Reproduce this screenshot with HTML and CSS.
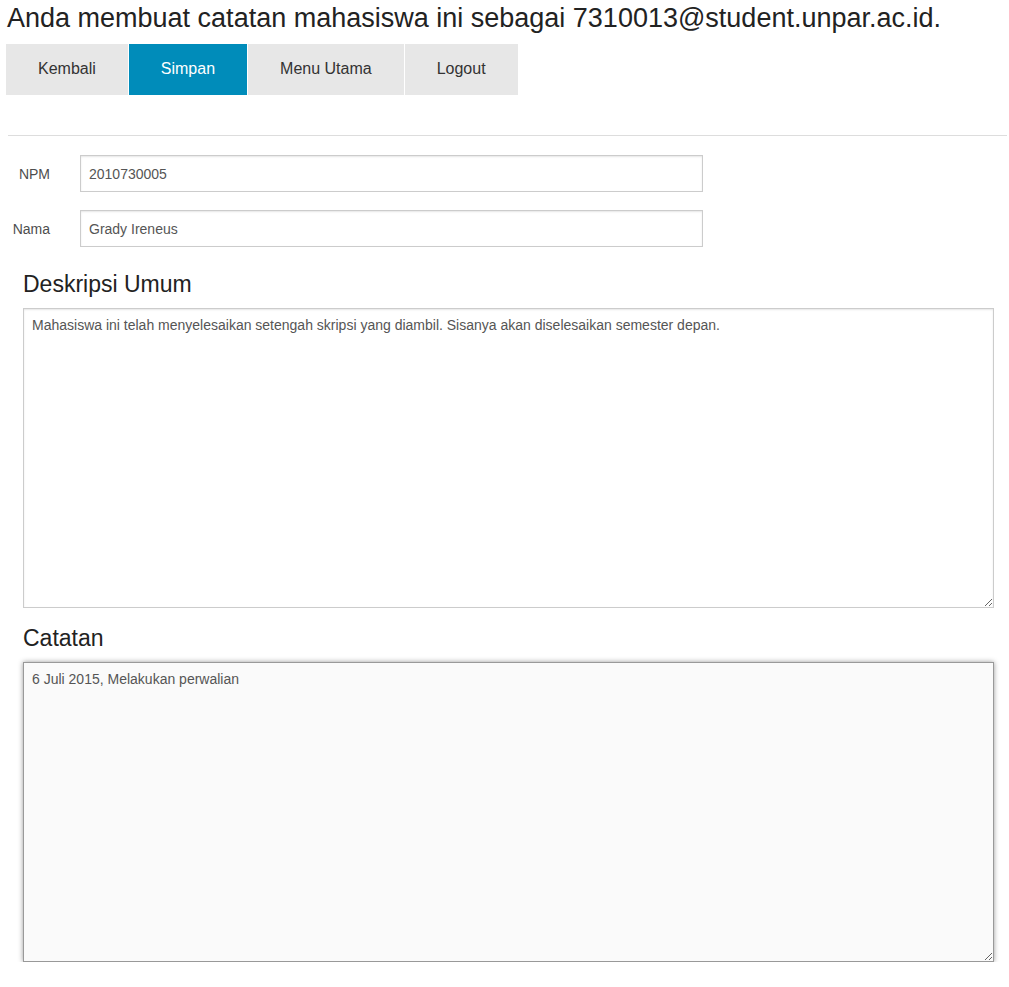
FILE: index.html
```html
<!DOCTYPE html>
<html lang="id">
<head>
<meta charset="utf-8">
<title>Catatan Mahasiswa</title>
<link rel="stylesheet" href="styles.css">
</head>
<body>
<h1 class="title">Anda membuat catatan mahasiswa ini sebagai 7310013@student.unpar.ac.id.</h1>
<nav class="nav">
  <a class="btn" href="#">Kembali</a>
  <a class="btn btn-primary" href="#">Simpan</a>
  <a class="btn" href="#">Menu Utama</a>
  <a class="btn" href="#">Logout</a>
</nav>
<hr class="divider">
<form class="form">
  <div class="row">
    <label class="label" for="npm">NPM</label>
    <input class="input" id="npm" type="text" value="2010730005">
  </div>
  <div class="row">
    <label class="label" for="nama">Nama</label>
    <input class="input" id="nama" type="text" value="Grady Ireneus">
  </div>
  <section class="section section-first">
    <h4 class="heading">Deskripsi Umum</h4>
    <textarea class="area">Mahasiswa ini telah menyelesaikan setengah skripsi yang diambil. Sisanya akan diselesaikan semester depan.</textarea>
  </section>
  <section class="section">
    <h4 class="heading">Catatan</h4>
    <textarea class="area area-focus">6 Juli 2015, Melakukan perwalian</textarea>
  </section>
</form>
</body>
</html>
```
FILE: styles.css
```css
html, body {
  margin: 0;
  padding: 0;
  background: #fff;
}
body {
  font-family: "Liberation Sans", Arial, Helvetica, sans-serif;
  color: #222;
}
.title {
  margin: 0;
  padding: 2px 0 0 7px;
  font-size: 27px;
  font-weight: normal;
  line-height: 32px;
  color: #222;
}
.nav {
  display: flex;
  gap: 1px;
  margin: 10px 0 0 6px;
}
.btn {
  display: block;
  padding: 16px 32px 17px;
  font-size: 16px;
  line-height: 18px;
  background: #e7e7e7;
  color: #333;
  text-decoration: none;
}
.btn-primary {
  background: #008cba;
  color: #fff;
}
.divider {
  margin: 40px 2px 0 8px;
  border: 0;
  border-top: 1px solid #ddd;
  height: 0;
}
.form {
  padding-top: 19px;
}
.row {
  display: flex;
  align-items: center;
  gap: 30px;
}
.row + .row {
  margin-top: 18px;
}
.label {
  width: 50px;
  text-align: right;
  font-size: 14px;
  color: #4d4d4d;
}
.input {
  box-sizing: border-box;
  width: 623px;
  height: 37px;
  margin: 0;
  padding: 0 8px;
  border: 1px solid #ccc;
  box-shadow: inset 0 1px 2px rgba(0, 0, 0, 0.1);
  font-family: inherit;
  font-size: 14px;
  color: #555;
  background: #fff;
}
.section {
  padding-left: 23px;
  padding-top: 16px;
}
.section-first {
  padding-top: 23px;
}
.heading {
  margin: 0;
  font-size: 23px;
  font-weight: normal;
  line-height: 28px;
  color: #222;
}
.area {
  display: block;
  box-sizing: border-box;
  width: 971px;
  height: 300px;
  margin-top: 10px;
  padding: 8px;
  border: 1px solid #ccc;
  box-shadow: inset 0 1px 2px rgba(0, 0, 0, 0.1);
  font-family: inherit;
  font-size: 14px;
  line-height: 1.2;
  color: #555;
  background: #fff;
  resize: vertical;
}
.area-focus {
  background: #fafafa;
  border-color: #999;
  box-shadow: 0 0 5px #999;
}
```
